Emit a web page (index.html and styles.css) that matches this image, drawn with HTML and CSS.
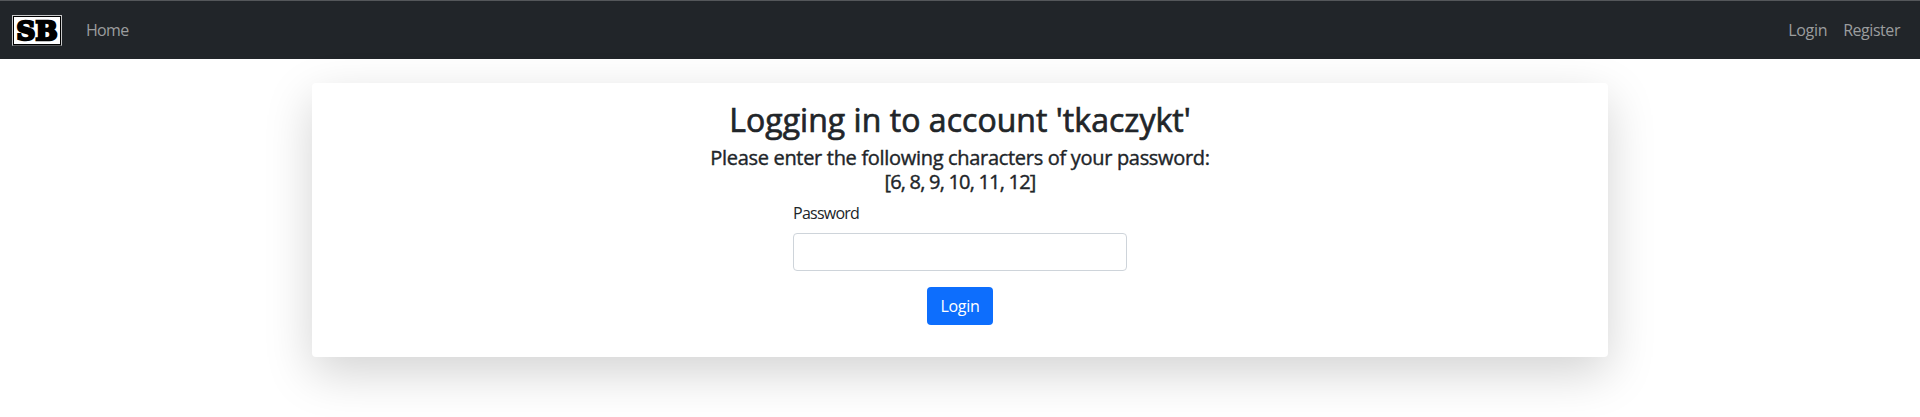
FILE: index.html
```html
<!DOCTYPE html>
<html lang="en">
<head>
<meta charset="utf-8">
<title>Login</title>
<link rel="stylesheet" href="styles.css">
</head>
<body>
<nav class="navbar">
  <a class="brand" href="#" aria-label="SB">
    <span class="logo"><span class="logo-text">SB</span></span>
  </a>
  <a class="nav-link home" href="#">Home</a>
  <div class="nav-right">
    <a class="nav-link login" href="#">Login</a>
    <a class="nav-link register" href="#">Register</a>
  </div>
</nav>
<main class="card">
  <h2 class="title">Logging in to account 'tkaczykt'</h2>
  <h5 class="subtitle">Please enter the following characters of your password:<br><span class="positions">[6, 8, 9, 10, 11, 12]</span></h5>
  <form class="form">
    <label class="label" for="password">Password</label>
    <input class="input" id="password" type="password">
    <button class="button" type="button">Login</button>
  </form>
</main>
</body>
</html>
```
FILE: styles.css
```css
* { box-sizing: border-box; }
body {
  margin: 0;
  min-height: 417px;
  background: #fff;
  color: #212529;
  font: 400 16px/24px "Segoe UI", "Open Sans", "Noto Sans", sans-serif;
}
.navbar {
  display: flex;
  align-items: center;
  height: 59px;
  padding: 1px 20px 0 12px;
  background: #212529;
  border-top: 1px solid #54575a;
}
.brand { text-decoration: none; margin-right: 24px; }
.logo {
  display: flex;
  align-items: center;
  justify-content: center;
  width: 50px;
  height: 31px;
  border: 1px solid #c8c9ca;
  border-bottom-color: #55585b;
  background: #fff;
  box-shadow: inset 0 0 0 1px #000;
  color: #000;
}
.logo-text {
  font: 700 26px/26px "DejaVu Serif", serif;
  letter-spacing: 0;
  -webkit-text-stroke: 2.6px #000;
}
.nav-link { color: #9b9d9e; text-decoration: none; letter-spacing: -0.3px; padding-bottom: 2px; }
.home { letter-spacing: -0.7px; }
.register { letter-spacing: -0.45px; }
.nav-right { display: flex; gap: 16px; margin-left: auto; }
.card {
  width: 1296px;
  height: 274px;
  margin: 24px auto 0;
  padding: 18px 16px 16px;
  border-radius: 4px;
  background: #fff;
  box-shadow: 0 16px 48px rgba(0, 0, 0, .175);
  text-align: center;
}
.title {
  margin: 0 0 7px;
  font-size: 32px;
  line-height: 38px;
  font-weight: 500;
  letter-spacing: 0.04px;
  -webkit-text-stroke: .7px #212529;
}
.subtitle {
  margin: 0 0 7px;
  font-size: 20px;
  line-height: 24px;
  font-weight: 500;
  letter-spacing: -0.31px;
  -webkit-text-stroke: .4px #212529;
}
.positions { letter-spacing: -0.8px; }
.form { display: flex; flex-direction: column; align-items: center; width: 334px; margin: 0 auto; }
.label { align-self: flex-start; margin-bottom: 8px; letter-spacing: -0.75px; }
.input { width: 334px; height: 38px; border: 1px solid #ced4da; border-radius: 4px; background: #fff; }
.button {
  width: 66px;
  height: 38px;
  margin-top: 16px;
  padding: 0;
  border: 0;
  border-radius: 4px;
  background: #0d6efd;
  color: #fff;
  font: inherit;
  letter-spacing: -0.3px;
}
```
